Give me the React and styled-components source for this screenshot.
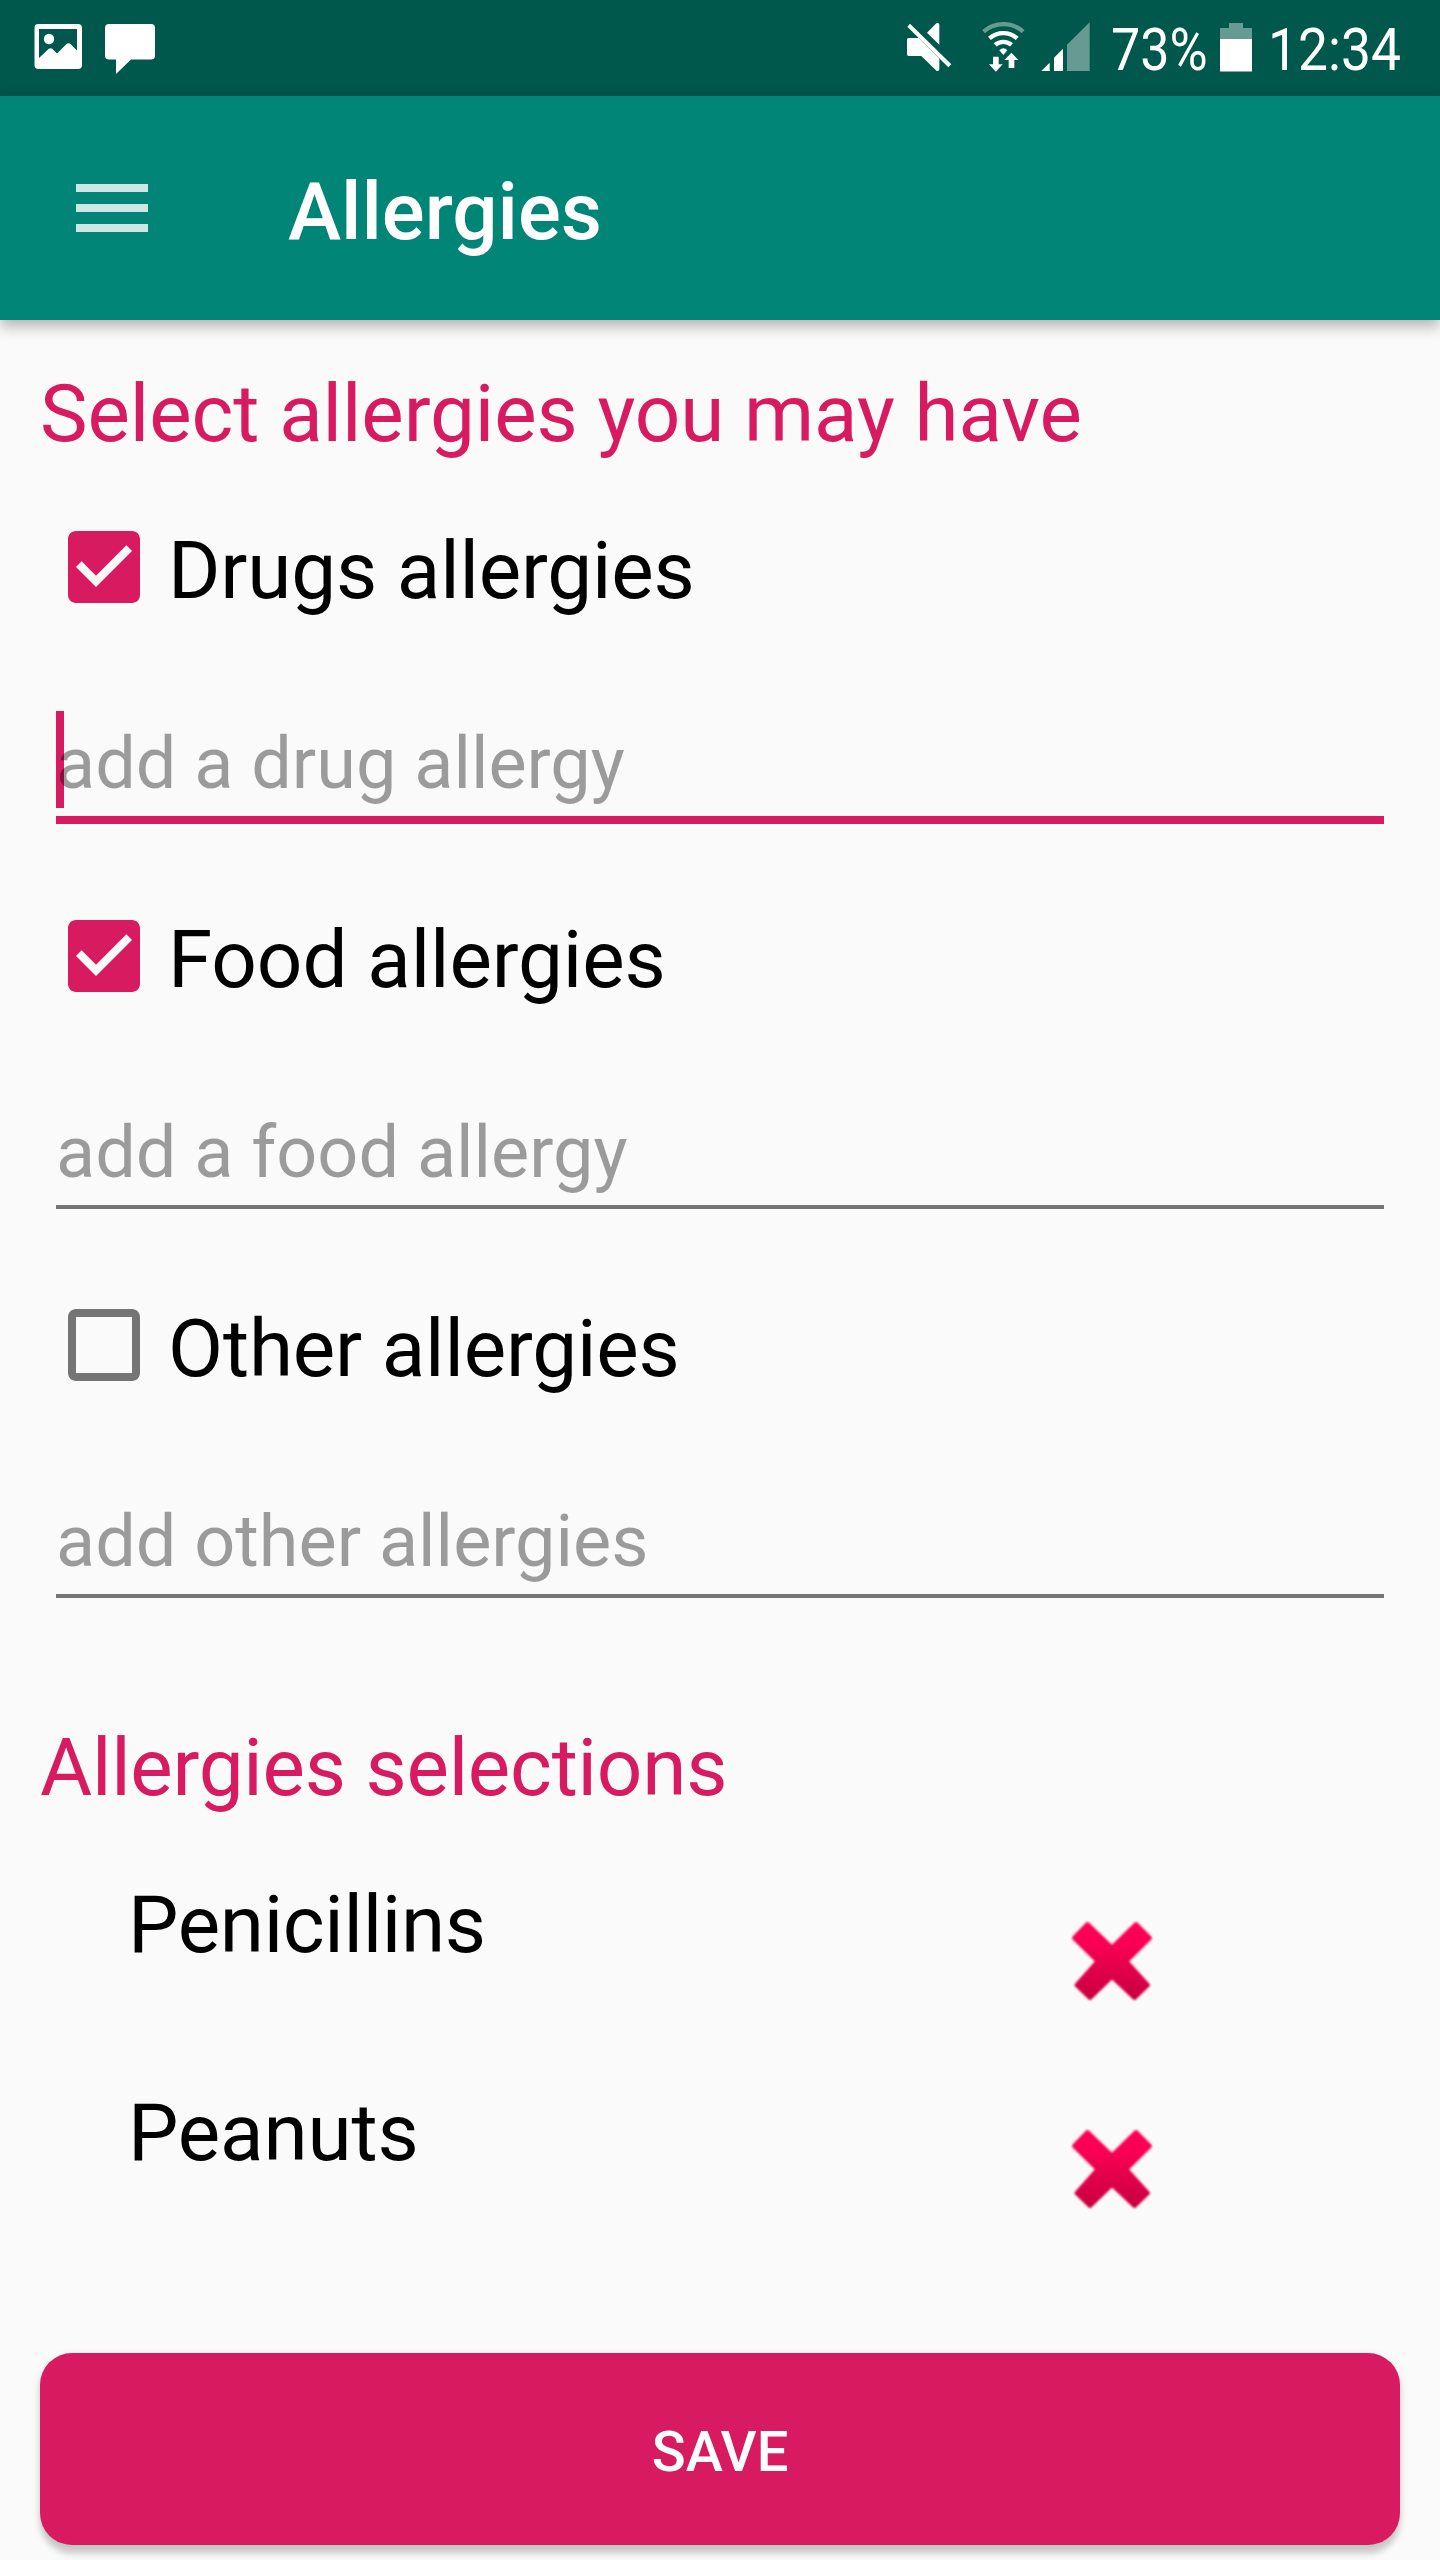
import React, { useState } from "react";
import styled, { createGlobalStyle } from "styled-components";

const GlobalStyle = createGlobalStyle`
  *, *::before, *::after { box-sizing: border-box; }
  html, body { margin: 0; padding: 0; background: #fafafa; }
  body { font-family: Roboto, "Liberation Sans", sans-serif; }
`;

const Screen = styled.div`
  width: 1440px;
  height: 2560px;
  display: flex;
  flex-direction: column;
  background: #fafafa;
  overflow: hidden;
`;

const StatusBar = styled.header`
  flex: none;
  height: 96px;
  display: flex;
  justify-content: space-between;
  padding: 19px 38px 0 34px;
  background: #00574b;
  color: #fff;
`;

const StatusGroup = styled.div`
  display: flex;
  align-items: flex-start;
`;

const StatusIcon = styled.svg`
  display: block;
  flex: none;
  width: ${(p) => p.$width}px;
  height: 55px;
  margin-right: ${(p) => p.$gap || 0}px;
  fill: #fff;
`;

const StatusText = styled.div`
  width: ${(p) => p.$width}px;
  margin-right: ${(p) => p.$gap || 0}px;
  font-size: 60px;
  line-height: 62px;
  white-space: nowrap;

  span {
    display: inline-block;
    transform: scaleX(${(p) => p.$condense});
    transform-origin: left;
  }
`;

const AppBar = styled.div`
  flex: none;
  height: 224px;
  display: flex;
  align-items: flex-start;
  padding: 88px 76px 0;
  background: #008577;
  box-shadow: 0 6px 14px rgba(0, 0, 0, 0.3);
`;

const MenuButton = styled.button`
  display: flex;
  flex-direction: column;
  gap: 12px;
  width: 72px;
  margin-right: 140px;
  padding: 0;
  border: 0;
  background: none;
`;

const MenuLine = styled.span`
  height: 8px;
  background: rgba(255, 255, 255, 0.8);
`;

const Title = styled.h1`
  margin: -19px 0 0;
  color: #fff;
  font-size: 80px;
  font-weight: 500;
  line-height: 94px;
`;

const Content = styled.main`
  display: flex;
  flex-direction: column;
  padding: 47px 40px 0;
`;

const Heading = styled.h2`
  margin: 0;
  color: #d81b60;
  font-size: 80px;
  font-weight: 400;
  line-height: 94px;
  letter-spacing: ${(p) => p.$tracking}px;
`;

const Fields = styled.div`
  display: flex;
  flex-direction: column;
  padding: 58px 16px 35px;
`;

const Field = styled.section`
  height: 389px;
`;

const CheckRow = styled.label`
  display: flex;
  height: 96px;
  align-items: flex-start;
`;

const CheckIcon = styled.svg`
  width: 96px;
  height: 96px;
  margin-right: 16px;
  flex: none;
  fill: ${(p) => (p.$checked ? "#d81b60" : "#757575")};
`;

const CheckLabel = styled.span`
  margin-top: 5px;
  color: #000;
  font-size: 80px;
  line-height: 94px;
  letter-spacing: ${(p) => p.$tracking}px;
`;

const Entry = styled.div`
  position: relative;
  height: ${(p) => (p.$focused ? 109 : 105)}px;
  margin-top: 100px;
  padding-top: 6px;
  border-bottom: ${(p) => (p.$focused ? "8px solid #d81b60" : "4px solid #757575")};
`;

const Caret = styled.i`
  position: absolute;
  left: 0;
  top: -4px;
  width: 8px;
  height: 97px;
  background: #d81b60;
`;

const Hint = styled.span`
  position: relative;
  display: block;
  color: rgba(0, 0, 0, 0.38);
  font-size: 72px;
  line-height: 85px;
`;

const Selections = styled.ul`
  display: flex;
  flex-direction: column;
  margin: 0;
  padding: 63px 240px 0 88px;
  list-style: none;
`;

const Selection = styled.li`
  display: flex;
  justify-content: space-between;
  align-items: flex-start;
  height: 208px;
  color: #000;
  font-size: 80px;
  line-height: 94px;
  letter-spacing: ${(p) => p.$tracking}px;
`;

const RemoveButton = styled.button`
  display: block;
  width: 96px;
  height: 96px;
  margin-top: 34px;
  padding: 0;
  border: 0;
  background: none;

  svg { display: block; }
`;

const SaveButton = styled.button`
  height: 192px;
  margin-top: 59px;
  padding: 5px 0 0;
  border: 0;
  border-radius: 32px;
  background: #d81b60;
  box-shadow: 0 10px 6px -1px rgba(0, 0, 0, 0.15), 0 3px 10px rgba(0, 0, 0, 0.12);
  color: #fff;
  font-family: inherit;
  font-size: 56px;
  font-weight: 500;
  line-height: 66px;
`;

function Check({ checked }) {
  return (
    <CheckIcon viewBox="0 0 24 24" $checked={checked}>
      {checked ? (
        <path d="M19 3H5c-1.11 0-2 .9-2 2v14c0 1.1.89 2 2 2h14c1.11 0 2-.9 2-2V5c0-1.1-.89-2-2-2zm-9 14l-5-5 1.41-1.41L10 14.17l7.59-7.59L19 8l-9 9z" />
      ) : (
        <path d="M19 5v14H5V5h14m0-2H5c-1.1 0-2 .9-2 2v14c0 1.1.9 2 2 2h14c1.1 0 2-.9 2-2V5c0-1.1-.9-2-2-2z" />
      )}
    </CheckIcon>
  );
}

function Cross({ id }) {
  return (
    <svg width="96" height="96" viewBox="0 0 96 96">
      <defs>
        <linearGradient id={id} x1="0" y1="10" x2="0" y2="86" gradientUnits="userSpaceOnUse">
          <stop offset="0" stopColor="#ff0058" />
          <stop offset="0.3" stopColor="#f80054" />
          <stop offset="1" stopColor="#c90041" />
        </linearGradient>
        <filter id={`${id}-soft`} x="-10%" y="-10%" width="120%" height="120%">
          <feGaussianBlur stdDeviation="0.9" />
        </filter>
      </defs>
      <path
        d="M23.5 12 L48 35.500 L72 12 L86 26 L62.500 49.300 L84 73 L70.500 86 L48 64.800 L26 86 L12.500 73 L33.500 49.300 L10 26 Z"
        fill={`url(#${id})`}
        stroke={`url(#${id})`}
        strokeWidth="4"
        strokeLinejoin="round"
        filter={`url(#${id}-soft)`}
      />
    </svg>
  );
}

const initialFields = [
  { label: "Drugs allergies", hint: "add a drug allergy", checked: true, focused: true, tracking: -0.16 },
  { label: "Food allergies", hint: "add a food allergy", checked: true, tracking: -0.08 },
  { label: "Other allergies", hint: "add other allergies", checked: false, tracking: -0.15 },
];

const initialSelections = [
  { name: "Penicillins", tracking: -0.31 },
  { name: "Peanuts", tracking: -0.15 },
];

export default function App() {
  const [fields] = useState(initialFields);
  const [selections] = useState(initialSelections);

  return (
    <>
      <GlobalStyle />
      <Screen>
        <StatusBar>
          <StatusGroup>
            <StatusIcon viewBox="34 19 48 55" $width={48} $gap={23}>
              <path
                fillRule="evenodd"
                d="M38 24h40q4 0 4 4v37q0 4-4 4H38.500q-4 0-4-4V28q0-4 3.500-4zM39 29v29l9.500-9q2-1.500 4 0L57 53.500l9.500-9.500q2-1.700 4 0l6.500 6.500V29z"
              />
              <circle cx="49" cy="39" r="5.200" />
            </StatusIcon>
            <StatusIcon viewBox="105 19 50 55" $width={50}>
              <path d="M109 24h42q4 0 4 4v27.500q0 4-4 4h-20L116 74V59.500h-7q-4 0-4-4V28q0-4 4-4z" />
            </StatusIcon>
          </StatusGroup>
          <StatusGroup>
            <StatusIcon viewBox="30 15 141 165" $width={47} $gap={28}>
              <path d="M42 29L34 38L157 160L166 151Z" />
              <path d="M38 72H68L130 134V166Q130 171 125 171H122L76 126H38Q33 126 33 121V77Q33 72 38 72Z" />
              <path d="M93 56L121 28Q130 24 130 33V92Z" />
            </StatusIcon>
            <StatusIcon viewBox="255 15 135 165" $width={45} $gap={14}>
              <g fill="none" stroke="#fff" strokeWidth="13">
                <path strokeOpacity="0.4" d="M262.600 52.700A90.500 90.500 0 0 1 381.400 52.700" />
                <path d="M280.300 73A63.500 63.500 0 0 1 363.700 73" />
                <path d="M297.400 92.700A37.500 37.500 0 0 1 346.600 92.700" />
              </g>
              <path d="M310 109Q322 96 334 109L322 123Z" />
              <path d="M291 128H308V151H320L299.500 173L279 151H291Z" />
              <path d="M346.500 116L367 138H355V162H338V138H325Z" />
            </StatusIcon>
            <StatusIcon viewBox="432 15 153 165" $width={51} $gap={20}>
              <path d="M436 171L461 146V171Z" />
              <path d="M474 171V131L501 104V171Z" />
              <path fillOpacity="0.4" d="M513 171V92L581 25V171Z" />
            </StatusIcon>
            <StatusText $width={98} $gap={11} $condense={0.868}>
              <span>73%</span>
            </StatusText>
            <StatusIcon viewBox="1220 19 32 55" $width={32} $gap={16}>
              <path fillOpacity="0.4" d="M1229 23H1243V28H1252V39H1220V28H1229Z" />
              <path d="M1220 39H1252V71.500H1220Z" />
            </StatusIcon>
            <StatusText $width={134} $condense={0.89}>
              <span>12:34</span>
            </StatusText>
          </StatusGroup>
        </StatusBar>

        <AppBar>
          <MenuButton aria-label="Menu">
            <MenuLine />
            <MenuLine />
            <MenuLine />
          </MenuButton>
          <Title>Allergies</Title>
        </AppBar>

        <Content>
          <Heading $tracking={-0.08}>Select allergies you may have</Heading>
          <Fields>
            {fields.map((field) => (
              <Field key={field.label}>
                <CheckRow>
                  <Check checked={field.checked} />
                  <CheckLabel $tracking={field.tracking}>{field.label}</CheckLabel>
                </CheckRow>
                <Entry $focused={field.focused}>
                  {field.focused && <Caret />}
                  <Hint>{field.hint}</Hint>
                </Entry>
              </Field>
            ))}
          </Fields>
          <Heading $tracking={-0.24}>Allergies selections</Heading>
          <Selections>
            {selections.map(({ name, tracking }, index) => (
              <Selection key={name} $tracking={tracking}>
                {name}
                <RemoveButton aria-label={`Remove ${name}`}>
                  <Cross id={`cross-${index}`} />
                </RemoveButton>
              </Selection>
            ))}
          </Selections>
          <SaveButton>SAVE</SaveButton>
        </Content>
      </Screen>
    </>
  );
}
